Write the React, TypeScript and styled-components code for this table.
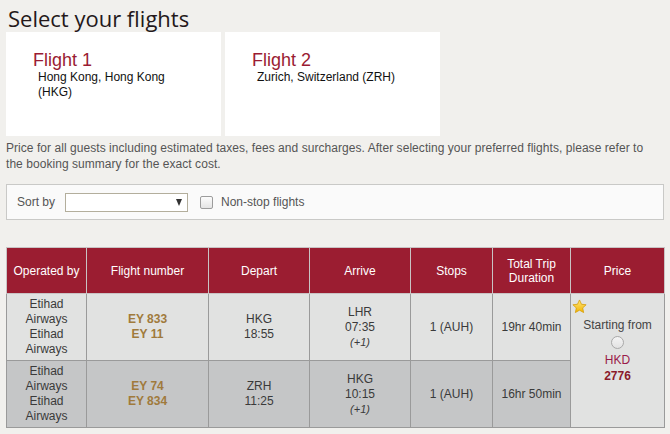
import React from "react";
import styled, { createGlobalStyle } from "styled-components";

const Global = createGlobalStyle`
  html, body { margin: 0; padding: 0; background: #f1f0ed; }
  body { font-family: "Liberation Sans", Arial, sans-serif; font-size: 12px; color: #333; }
`;

const Page = styled.div`
  padding: 0 6px;
  width: 658px;
`;

const Title = styled.h1`
  margin: 0;
  padding: 4px 0 0 2px;
  font-family: "Open Sans", "Noto Sans", sans-serif;
  font-weight: 400;
  font-size: 22px;
  line-height: 28px;
  color: #24181a;
`;

const Cards = styled.div`
  display: flex;
  gap: 4px;
`;

const Card = styled.div`
  width: 215px;
  height: 104px;
  background: #fff;
  box-sizing: border-box;
  padding: 20px 0 0 27px;
`;

const CardTitle = styled.div`
  font-size: 18px;
  line-height: 17px;
  color: #9a1b32;
`;

const CardPlace = styled.div`
  margin-left: 5px;
  margin-top: 1px;
  width: 150px;
  font-size: 12px;
  line-height: 15px;
  color: #111;
`;

const Note = styled.p`
  margin: 4px 0 0;
  max-width: 646px;
  font-size: 12px;
  line-height: 16px;
  letter-spacing: 0.05px;
  color: #555;
`;

const SortBar = styled.div`
  margin-top: 12px;
  height: 36px;
  box-sizing: border-box;
  border: 1px solid #c9c9c7;
  background: #fafafa;
  display: flex;
  align-items: center;
  padding-left: 10px;
  color: #555;
`;

const SortLabel = styled.span`
  margin-right: 10px;
`;

const SelectBox = styled.div`
  width: 123px;
  height: 19px;
  box-sizing: border-box;
  border: 1px solid #b3ae9c;
  background: #fff;
  display: flex;
  align-items: center;
  justify-content: flex-end;
  padding-right: 5px;
`;

const Caret = styled.span`
  width: 0;
  height: 0;
  border-left: 3.5px solid transparent;
  border-right: 3.5px solid transparent;
  border-top: 7px solid #333;
`;

const Check = styled.span`
  margin: 0 8px 0 12px;
  width: 11px;
  height: 11px;
  border: 1px solid #9c9c9c;
  border-radius: 2px;
  background: linear-gradient(#fcfcfc, #e4e4e4);
`;

const Table = styled.table`
  margin-top: 27px;
  border-collapse: collapse;
  table-layout: fixed;
  width: 658px;
  font-size: 12px;
`;

const Th = styled.th`
  background: #9b1d31;
  color: #fff;
  font-weight: 400;
  height: 45px;
  padding: 0 2px;
  line-height: 14px;
  border: 1px solid #c9c3c4;
  text-align: center;
  vertical-align: middle;
`;

const Td = styled.td<{ $alt?: boolean }>`
  background: ${(p) => (p.$alt ? "#c5c6c7" : "#e1e2e1")};
  border: 1px solid #9a9a9a;
  height: 66px;
  padding: 0;
  text-align: center;
  vertical-align: middle;
  line-height: 15px;
  color: #3a3a3a;
`;

const PriceTd = styled(Td)`
  vertical-align: top;
  background: #e1e2e1;
  padding-top: 5px;
`;

const FlightNo = styled.div`
  font-weight: 700;
  color: #a07a3c;
`;

const Plus = styled.div`
  font-style: italic;
  font-size: 11px;
`;

const StarWrap = styled.div`
  padding-left: 1px;
  height: 16px;
  text-align: left;
`;

const PriceText = styled.div`
  margin-top: 3px;
  line-height: 15px;
  color: #444;
`;

const Radio = styled.span`
  display: block;
  margin: 3px auto 3px;
  width: 11px;
  height: 11px;
  border: 1px solid #a8a8a8;
  border-radius: 50%;
  background: linear-gradient(#f4f4f4, #e2e2e2);
`;

const Currency = styled.div`
  color: #9a1b4a;
  line-height: 16px;
`;

const Amount = styled.div`
  color: #8a1a2a;
  font-weight: 700;
  line-height: 16px;
`;

const Star = () => (
  <svg width="15" height="15" viewBox="0 0 24 24">
    <defs>
      <linearGradient id="sg" x1="0" y1="0" x2="0" y2="1">
        <stop offset="0" stopColor="#ffe67a" />
        <stop offset="1" stopColor="#f2b400" />
      </linearGradient>
    </defs>
    <path
      d="M12 1.5l3.2 6.9 7.4.8-5.5 5.1 1.5 7.4L12 17.9l-6.6 3.8 1.5-7.4-5.5-5.1 7.4-.8z"
      fill="url(#sg)"
      stroke="#d49a00"
      strokeWidth="1.2"
      strokeLinejoin="round"
    />
  </svg>
);

const rows = [
  { nums: ["EY 833", "EY 11"], dep: ["HKG", "18:55"], arr: ["LHR", "07:35"], stops: "1 (AUH)", dur: "19hr 40min" },
  { nums: ["EY 74", "EY 834"], dep: ["ZRH", "11:25"], arr: ["HKG", "10:15"], stops: "1 (AUH)", dur: "16hr 50min" },
];

export default function App() {
  return (
    <>
      <Global />
      <Page>
        <Title>Select your flights</Title>
        <Cards>
          <Card>
            <CardTitle>Flight 1</CardTitle>
            <CardPlace>Hong Kong, Hong Kong (HKG)</CardPlace>
          </Card>
          <Card>
            <CardTitle>Flight 2</CardTitle>
            <CardPlace>Zurich, Switzerland (ZRH)</CardPlace>
          </Card>
        </Cards>
        <Note>
          Price for all guests including estimated taxes, fees and surcharges. After selecting your preferred flights, please refer to the booking summary for the exact cost.
        </Note>
        <SortBar>
          <SortLabel>Sort by</SortLabel>
          <SelectBox>
            <Caret />
          </SelectBox>
          <Check />
          <span>Non-stop flights</span>
        </SortBar>
        <Table>
          <colgroup>
            <col style={{ width: 80 }} />
            <col style={{ width: 122 }} />
            <col style={{ width: 101 }} />
            <col style={{ width: 101 }} />
            <col style={{ width: 82 }} />
            <col style={{ width: 78 }} />
            <col style={{ width: 94 }} />
          </colgroup>
          <thead>
            <tr>
              <Th>Operated by</Th>
              <Th>Flight number</Th>
              <Th>Depart</Th>
              <Th>Arrive</Th>
              <Th>Stops</Th>
              <Th>Total Trip Duration</Th>
              <Th>Price</Th>
            </tr>
          </thead>
          <tbody>
            {rows.map((r, i) => (
              <tr key={i}>
                <Td $alt={i === 1}>
                  Etihad
                  <br />
                  Airways
                  <br />
                  Etihad
                  <br />
                  Airways
                </Td>
                <Td $alt={i === 1}>
                  {r.nums.map((n) => (
                    <FlightNo key={n}>{n}</FlightNo>
                  ))}
                </Td>
                <Td $alt={i === 1}>
                  {r.dep[0]}
                  <br />
                  {r.dep[1]}
                </Td>
                <Td $alt={i === 1}>
                  {r.arr[0]}
                  <br />
                  {r.arr[1]}
                  <Plus>(+1)</Plus>
                </Td>
                <Td $alt={i === 1}>{r.stops}</Td>
                <Td $alt={i === 1}>{r.dur}</Td>
                {i === 0 && (
                  <PriceTd rowSpan={2}>
                    <StarWrap>
                      <Star />
                    </StarWrap>
                    <PriceText>Starting from</PriceText>
                    <Radio />
                    <Currency>HKD</Currency>
                    <Amount>2776</Amount>
                  </PriceTd>
                )}
              </tr>
            ))}
          </tbody>
        </Table>
      </Page>
    </>
  );
}
